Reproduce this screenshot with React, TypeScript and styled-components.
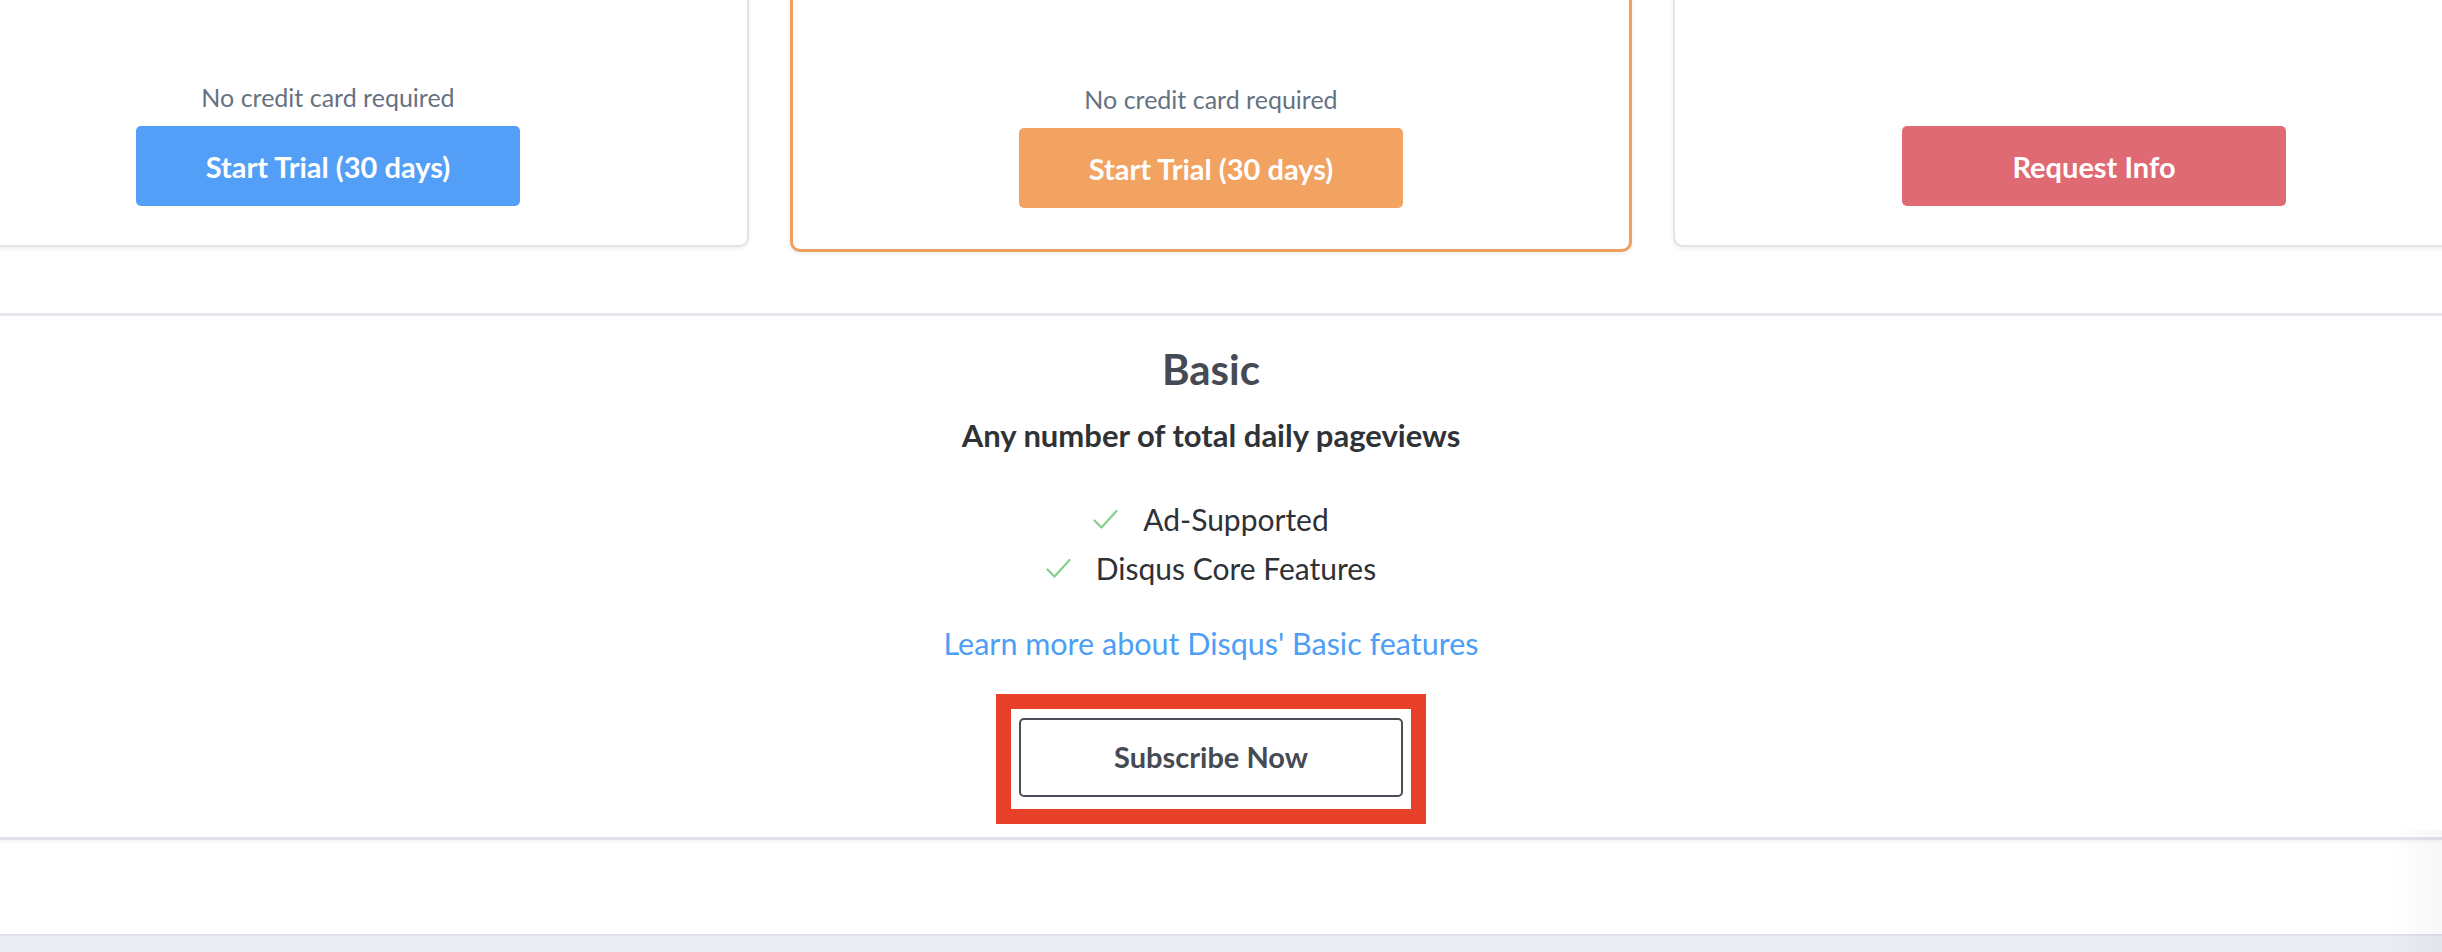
import React from "react";
import styled, { createGlobalStyle } from "styled-components";

const Global = createGlobalStyle`
  html, body { margin: 0; padding: 0; background: #ffffff; }
  body { font-family: Lato, "Open Sans", "Liberation Sans", sans-serif; }
  * { box-sizing: border-box; }
`;

const Page = styled.div`
  position: relative;
  width: 2442px;
  height: 952px;
  overflow: hidden;
  display: flex;
  flex-direction: column;
  background: #ffffff;
`;

const CardsRow = styled.div`
  display: flex;
  align-items: flex-start;
  gap: 41px;
  margin: -60px 0 0 -93px;
`;

type Variant = "plain" | "featured";

const PlanCard = styled.div<{ $variant: Variant }>`
  flex: 0 0 842px;
  height: ${(p) => (p.$variant === "featured" ? "312px" : "307px")};
  display: flex;
  flex-direction: column;
  align-items: center;
  justify-content: flex-end;
  padding-bottom: ${(p) => (p.$variant === "featured" ? "41px" : "39px")};
  background: #ffffff;
  border: ${(p) => (p.$variant === "featured" ? "3px solid #f09f5e" : "2px solid #e3e4ea")};
  border-radius: 10px;
  box-shadow: 0 2px 4px rgba(40, 50, 80, 0.08);
`;

const NoCard = styled.div`
  font-size: 25px;
  line-height: 30px;
  color: #66727f;
  margin-bottom: 14px;
`;

const CardButton = styled.button<{ $color: string }>`
  width: 384px;
  height: 80px;
  border: none;
  border-radius: 5px;
  background: ${(p) => p.$color};
  color: #ffffff;
  font-family: inherit;
  font-size: 29px;
  font-weight: 700;
  display: flex;
  align-items: center;
  justify-content: center;
  cursor: pointer;
`;

const BasicSection = styled.section`
  margin-top: 61px;
  border-top: 3px solid #e5e6eb;
  border-bottom: 3px solid #e2e3e8;
  box-shadow: 0 2px 4px rgba(40, 50, 80, 0.06);
  padding: 29px 20px 13px 0;
  display: flex;
  flex-direction: column;
  align-items: center;
`;

const Title = styled.h2`
  margin: 0;
  font-size: 42px;
  line-height: 48px;
  font-weight: 700;
  color: #454a54;
`;

const Subtitle = styled.div`
  margin-top: 24px;
  font-size: 31px;
  line-height: 36px;
  font-weight: 700;
  color: #2f3338;
`;

const FeatureList = styled.ul`
  list-style: none;
  margin: 42px 0 0;
  padding: 0;
  display: flex;
  flex-direction: column;
  align-items: center;
`;

const Feature = styled.li`
  display: flex;
  align-items: center;
  gap: 25px;
  font-size: 30px;
  line-height: 49px;
  color: #2e3136;
`;

const Check = styled.svg`
  width: 25px;
  height: 21px;
  flex: 0 0 auto;
`;

const LearnLink = styled.a`
  margin-top: 30px;
  font-size: 30.5px;
  line-height: 40px;
  color: #4d9ef5;
  text-decoration: none;
`;

const Highlight = styled.div`
  margin-top: 31px;
  border: 15px solid #e8412a;
  padding: 9px 8px 12px;
  background: #ffffff;
`;

const OutlineButton = styled.button`
  width: 384px;
  height: 79px;
  border: 2px solid #4a4e57;
  border-radius: 5px;
  background: #ffffff;
  color: #464a53;
  font-family: inherit;
  font-size: 29px;
  font-weight: 700;
  display: flex;
  align-items: center;
  justify-content: center;
  padding-bottom: 3px;
  cursor: pointer;
`;

const Blank = styled.div`
  flex: 1 1 auto;
`;

const FooterBand = styled.div`
  height: 18px;
  flex: 0 0 18px;
  background: #e9ecf1;
  border-top: 2px solid #dde0e6;
`;

const EdgeFade = styled.div`
  position: absolute;
  right: 0;
  top: 830px;
  bottom: 0;
  width: 50px;
  background: linear-gradient(to right, rgba(30, 40, 60, 0), rgba(30, 40, 60, 0.035));
  pointer-events: none;
`;

const CheckIcon = () => (
  <Check viewBox="0 0 25 21">
    <polyline
      points="1.5,11.5 8.5,18.5 23.5,2"
      fill="none"
      stroke="#86cf8a"
      strokeWidth="2.2"
      strokeLinecap="round"
      strokeLinejoin="round"
    />
  </Check>
);

export default function App() {
  return (
    <>
      <Global />
      <Page>
        <CardsRow>
          <PlanCard $variant="plain">
            <NoCard>No credit card required</NoCard>
            <CardButton $color="#539ff8">Start Trial (30 days)</CardButton>
          </PlanCard>
          <PlanCard $variant="featured">
            <NoCard>No credit card required</NoCard>
            <CardButton $color="#f2a261">Start Trial (30 days)</CardButton>
          </PlanCard>
          <PlanCard $variant="plain">
            <CardButton $color="#e06a73">Request Info</CardButton>
          </PlanCard>
        </CardsRow>
        <BasicSection>
          <Title>Basic</Title>
          <Subtitle>Any number of total daily pageviews</Subtitle>
          <FeatureList>
            <Feature>
              <CheckIcon />
              Ad-Supported
            </Feature>
            <Feature>
              <CheckIcon />
              Disqus Core Features
            </Feature>
          </FeatureList>
          <LearnLink href="#">Learn more about Disqus' Basic features</LearnLink>
          <Highlight>
            <OutlineButton>Subscribe Now</OutlineButton>
          </Highlight>
        </BasicSection>
        <Blank />
        <FooterBand />
        <EdgeFade />
      </Page>
    </>
  );
}
